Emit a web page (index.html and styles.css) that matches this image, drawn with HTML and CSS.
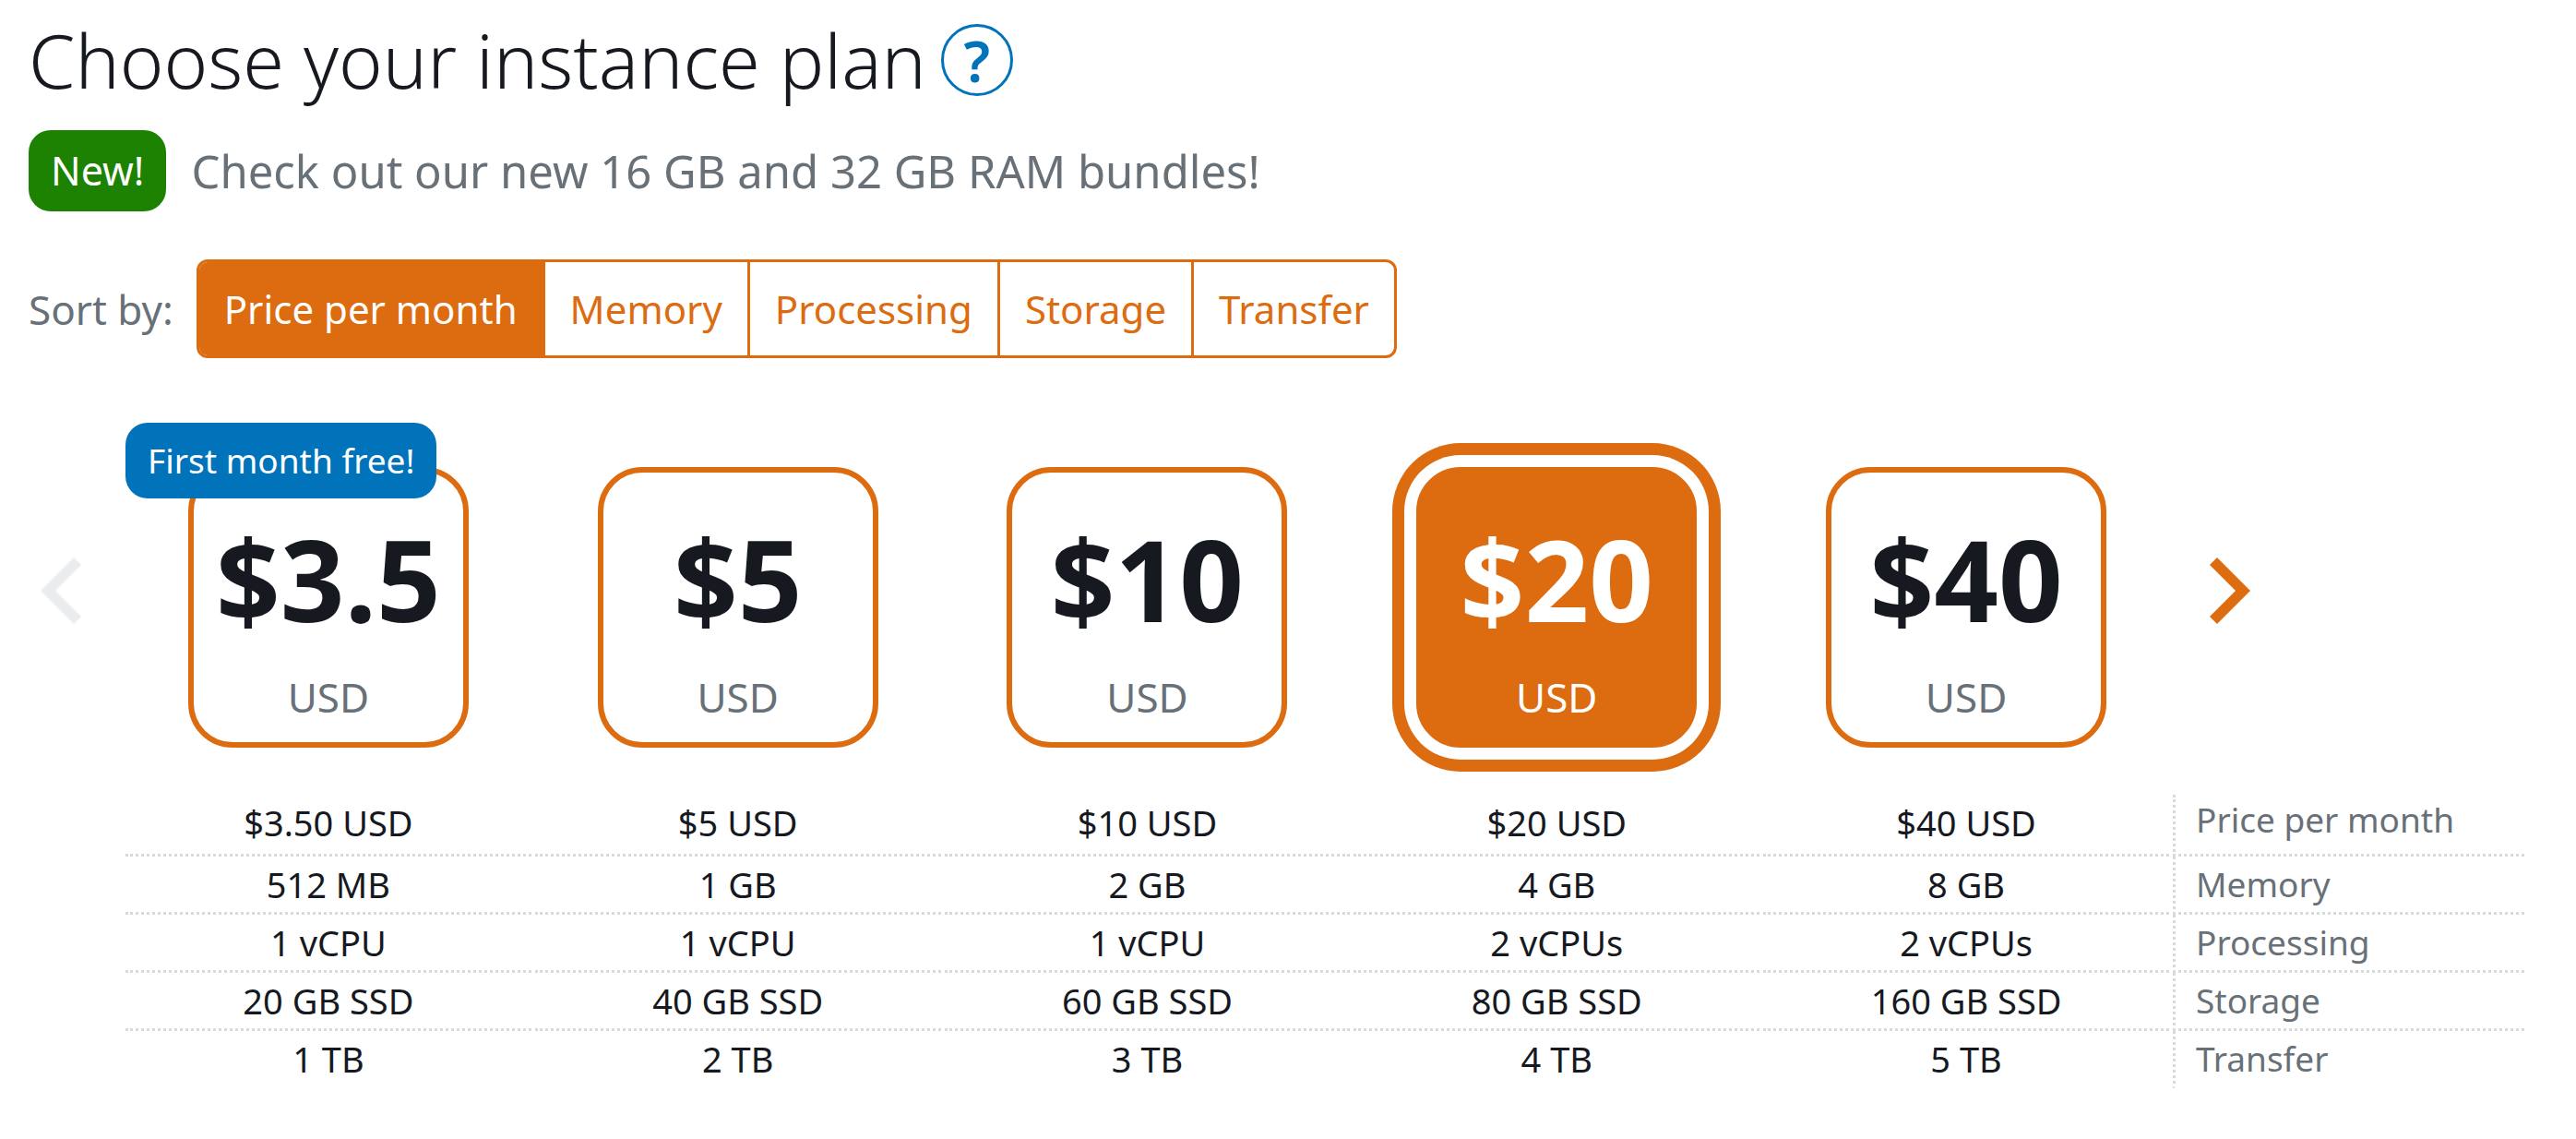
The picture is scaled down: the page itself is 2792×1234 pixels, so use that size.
FILE: index.html
```html
<!DOCTYPE html>
<html lang="en">
<head>
<meta charset="utf-8">
<meta name="viewport" content="width=device-width, initial-scale=1">
<title>Choose your instance plan</title>
<link rel="stylesheet" href="styles.css">
</head>
<body>
<main>
  <header class="heading">
    <h1 class="title">Choose your instance plan</h1>
    <button type="button" class="help">?</button>
  </header>

  <p class="notice">
    <span class="tag tag-new">New!</span>
    <span>Check out our new 16 GB and 32 GB RAM bundles!</span>
  </p>

  <div class="sort">
    <span id="sort-label">Sort by:</span>
    <div class="sort-options" role="group" aria-labelledby="sort-label">
      <button type="button" class="sort-option" aria-pressed="true">Price per month</button>
      <button type="button" class="sort-option" aria-pressed="false">Memory</button>
      <button type="button" class="sort-option" aria-pressed="false">Processing</button>
      <button type="button" class="sort-option" aria-pressed="false">Storage</button>
      <button type="button" class="sort-option" aria-pressed="false">Transfer</button>
    </div>
  </div>

  <table class="plans">
    <colgroup>
      <col class="col-nav">
      <col span="5">
      <col class="col-label">
    </colgroup>
    <thead>
      <tr>
        <td class="picker">
          <button type="button" class="arrow" disabled>
            <svg viewBox="0 0 44 72" width="44" height="72" aria-hidden="true"><path d="M36 0 0 36l36 36 8-8-28-28L44 8z"/></svg>
          </button>
        </td>
        <th class="picker" scope="col">
          <span class="tag tag-free">First month free!</span>
          <button type="button" class="card" aria-pressed="false"><span class="amount">$3.5</span><span class="currency">USD</span></button>
        </th>
        <th class="picker" scope="col">
          <button type="button" class="card" aria-pressed="false"><span class="amount">$5</span><span class="currency">USD</span></button>
        </th>
        <th class="picker" scope="col">
          <button type="button" class="card" aria-pressed="false"><span class="amount">$10</span><span class="currency">USD</span></button>
        </th>
        <th class="picker" scope="col">
          <button type="button" class="card" aria-pressed="true"><span class="amount">$20</span><span class="currency">USD</span></button>
        </th>
        <th class="picker" scope="col">
          <button type="button" class="card" aria-pressed="false"><span class="amount">$40</span><span class="currency">USD</span></button>
        </th>
        <td class="picker">
          <button type="button" class="arrow">
            <svg viewBox="0 0 44 72" width="44" height="72" aria-hidden="true"><path d="M8 0l36 36L8 72l-8-8 28-28L0 8z"/></svg>
          </button>
        </td>
      </tr>
    </thead>
    <tbody>
      <tr class="row row-price">
        <td></td>
        <td class="value">$3.50 USD</td>
        <td class="value">$5 USD</td>
        <td class="value">$10 USD</td>
        <td class="value">$20 USD</td>
        <td class="value">$40 USD</td>
        <th class="label" scope="row">Price per month</th>
      </tr>
      <tr class="row">
        <td></td>
        <td class="value">512 MB</td>
        <td class="value">1 GB</td>
        <td class="value">2 GB</td>
        <td class="value">4 GB</td>
        <td class="value">8 GB</td>
        <th class="label" scope="row">Memory</th>
      </tr>
      <tr class="row">
        <td></td>
        <td class="value">1 vCPU</td>
        <td class="value">1 vCPU</td>
        <td class="value">1 vCPU</td>
        <td class="value">2 vCPUs</td>
        <td class="value">2 vCPUs</td>
        <th class="label" scope="row">Processing</th>
      </tr>
      <tr class="row">
        <td></td>
        <td class="value">20 GB SSD</td>
        <td class="value">40 GB SSD</td>
        <td class="value">60 GB SSD</td>
        <td class="value">80 GB SSD</td>
        <td class="value">160 GB SSD</td>
        <th class="label" scope="row">Storage</th>
      </tr>
      <tr class="row">
        <td></td>
        <td class="value">1 TB</td>
        <td class="value">2 TB</td>
        <td class="value">3 TB</td>
        <td class="value">4 TB</td>
        <td class="value">5 TB</td>
        <th class="label" scope="row">Transfer</th>
      </tr>
    </tbody>
  </table>
</main>
</body>
</html>
```
FILE: styles.css
```css
:root {
  --orange: #dd6b10;
  --blue: #0073bb;
  --green: #1d8102;
  --ink: #16191f;
  --muted: #687078;
  --rule: #d5dbdb;
}

* {
  box-sizing: border-box;
}

body {
  margin: 0;
  padding: 20px 0 32px;
  background: #fff;
  color: var(--ink);
  font-family: "Noto Sans", "Open Sans", sans-serif;
}

button {
  margin: 0;
  padding: 0;
  border: 0;
  background: none;
  color: inherit;
  font: inherit;
  cursor: pointer;
}

/* Heading */

.heading,
.notice,
.sort {
  display: flex;
  align-items: center;
  padding: 0 31px;
}

.heading {
  gap: 16px;
}

.title {
  margin: 0;
  font-size: 81px;
  font-weight: 300;
  line-height: 90px;
}

.help {
  width: 78px;
  height: 78px;
  border: 3px solid var(--blue);
  border-radius: 50%;
  color: var(--blue);
  font-size: 62px;
  font-weight: 600;
  line-height: 68px;
}

.notice {
  gap: 27px;
  margin: 31px 0 52px;
  color: var(--muted);
  font-size: 49px;
}

.tag {
  padding: 0 24px;
  border-radius: 24px;
  color: #fff;
  font-weight: 400;
  white-space: nowrap;
}

.tag-new {
  background: var(--green);
  font-size: 43px;
  line-height: 88px;
}

/* Sort control */

.sort {
  gap: 25px;
  color: var(--muted);
  font-size: 44px;
}

.sort-options {
  display: flex;
  overflow: hidden;
  border: 3px solid var(--orange);
  border-radius: 12px;
}

.sort-option {
  padding: 0 27px;
  color: var(--orange);
  font-size: 42px;
  line-height: 101px;
}

.sort-option + .sort-option {
  border-left: 3px solid var(--orange);
}

.sort-option[aria-pressed="true"] {
  background: var(--orange);
  color: #fff;
}

/* Plan picker */

.plans {
  width: calc(100% - 52px);
  margin-top: 70px;
  border-spacing: 4px 0;
  table-layout: fixed;
}

.col-nav {
  width: 128px;
}

.col-label {
  width: 381px;
}

.picker {
  position: relative;
  padding: 48px 0 51px;
  vertical-align: top;
}

.tag-free {
  position: absolute;
  top: 0;
  left: 0;
  background: var(--blue);
  font-size: 37px;
  line-height: 82px;
}

.card {
  display: flex;
  flex-direction: column;
  align-items: center;
  gap: 38px;
  width: 304px;
  height: 304px;
  margin: 0 auto;
  padding-top: 55px;
  border: 6px solid var(--orange);
  border-radius: 48px;
}

.card[aria-pressed="true"] {
  background: var(--orange);
  box-shadow: 0 0 0 13px #fff, 0 0 0 26px var(--orange);
  color: #fff;
}

.amount {
  font-size: 122px;
  font-weight: 700;
  line-height: 120px;
}

.currency {
  color: var(--muted);
  font-size: 44px;
  font-weight: 400;
  line-height: 60px;
}

.card[aria-pressed="true"] .currency {
  color: inherit;
}

.arrow {
  display: flex;
  align-items: center;
  height: 268px;
  padding: 0 40px;
  color: var(--orange);
}

.arrow:disabled {
  color: #eaeded;
  cursor: default;
}

.arrow svg {
  fill: currentColor;
}

/* Plan details */

.value,
.label {
  padding: 0;
  border-bottom: 3px dotted var(--rule);
  font-weight: 400;
  line-height: 60px;
  vertical-align: top;
  white-space: nowrap;
}

.value {
  font-size: 38px;
  text-align: center;
}

.label {
  padding-left: 22px;
  border-left: 3px dotted var(--rule);
  color: var(--muted);
  font-size: 37px;
  text-align: left;
}

.row-price .value {
  padding-bottom: 4px;
}

.row-price .label {
  line-height: 54px;
}

.row:last-child .value,
.row:last-child .label {
  border-bottom-color: transparent;
}
```
